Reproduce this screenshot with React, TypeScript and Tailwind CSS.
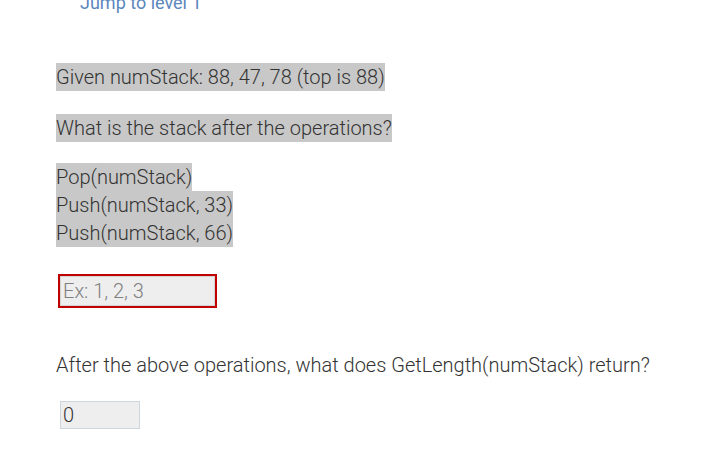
import React from 'react'

export default function App() {
  return (
    <div className="min-h-screen bg-white overflow-hidden font-['Roboto',sans-serif] font-light text-[20px] leading-7 text-[#333333]">
      <div className="pl-14">
        {/* Jump link (cut off at top) */}
        <div className="-mt-[11px] mb-[-3px] ml-6 text-[18px] font-normal text-[#5b87bd]">Jump to level 1</div>

        {/* Question prompt */}
        <p className="mt-[49px]">
          <span className="inline-block bg-[#c8c8c8]">Given numStack: 88, 47, 78 (top is 88)</span>
        </p>
        <p className="mt-[23px]">
          <span className="inline-block bg-[#c8c8c8]">What is the stack after the operations?</span>
        </p>

        <div className="mt-[21px]">
          <div className="w-fit bg-[#c8c8c8]">Pop(numStack)</div>
          <div className="w-fit bg-[#c8c8c8]">Push(numStack, 33)</div>
          <div className="w-fit bg-[#c8c8c8]">Push(numStack, 66)</div>
        </div>

        {/* Answer box with error outline */}
        <div className="mt-[27px] ml-[2px] w-[159px] h-[34px] border-2 border-[#c00000]">
          <input
            type="text"
            placeholder="Ex: 1, 2, 3"
            className="w-full h-full border border-[#d4d4d4] bg-[#eeeeee] px-[2px] text-[20px] font-light text-[#333] placeholder:text-[#808080] outline-none"
          />
        </div>

        <p className="mt-[43px]">After the above operations, what does GetLength(numStack) return?</p>

        <input
          type="text"
          defaultValue="0"
          className="mt-[22px] ml-1 block w-20 h-7 border border-[#ccd6dd] bg-[#eeeeee] px-[2px] text-[20px] font-light text-[#333] outline-none"
        />
      </div>
    </div>
  )
}
